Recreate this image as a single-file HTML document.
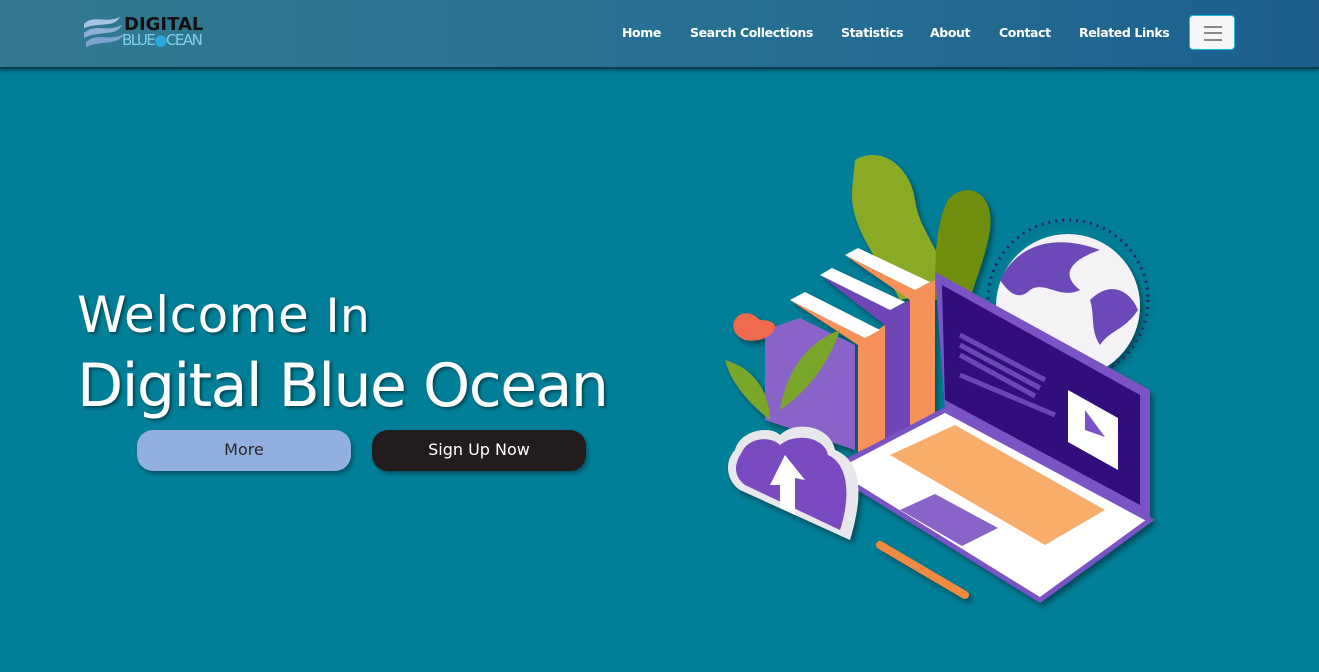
<!DOCTYPE html>
<html><head><meta charset="utf-8"><style>
*{margin:0;padding:0;box-sizing:border-box}
body{width:1319px;height:672px;background:#017f98;overflow:hidden;font-family:"Liberation Sans","DejaVu Sans",sans-serif;position:relative}
.nav{position:absolute;left:0;top:0;width:1319px;height:69px;background:linear-gradient(90deg,#327990,#266f92 60%,#1c5f8e);border-bottom:2px solid #0d3d50;box-shadow:0 2px 3px rgba(0,0,0,.35)}
.nav a{position:absolute;top:25px;color:#fff;font-family:"DejaVu Sans",sans-serif;font-weight:bold;font-size:12.5px;text-decoration:none;letter-spacing:-0.4px}
.tog{position:absolute;left:1189px;top:15px;width:46px;height:35px;background:#f5f6f8;border:1px solid #19c0dd;border-radius:4px}
.tog i{position:absolute;left:14px;width:18px;height:2px;background:#888}
h1{position:absolute;color:#fff;font-weight:normal;text-shadow:2px 2px 3px rgba(0,0,0,.45);white-space:nowrap;font-family:"DejaVu Sans",sans-serif}
.btn{position:absolute;top:430px;height:41px;border-radius:16px;font-family:"DejaVu Sans",sans-serif;font-size:16px;text-align:center;line-height:40px;box-shadow:2px 3px 4px rgba(0,0,0,.35)}
</style></head><body>
<div class="nav">
<svg style="position:absolute;left:82px;top:10px" width="130" height="40" viewBox="0 0 130 40">
<path d="M2 14 C12 4,22 14,38 7 C32 18,18 12,2 18Z" fill="#a9c4e2"/>
<path d="M2 23 C14 13,24 23,40 15 C34 27,18 20,2 28Z" fill="#8fb0d6"/>
<path d="M4 32 C16 22,26 32,42 24 C36 36,20 30,4 37Z" fill="#7fa3cf"/>
<text x="42" y="20" font-family="DejaVu Sans" font-weight="bold" font-size="18" fill="#111">DIGITAL</text>
<text x="40" y="35" font-family="DejaVu Sans" font-size="15" fill="#7fd0ea" letter-spacing="-1.5">BLUE<tspan fill="#29a9e0">●</tspan>CEAN</text>
</svg>
<a style="left:622px">Home</a>
<a style="left:690px">Search Collections</a>
<a style="left:841px">Statistics</a>
<a style="left:930px">About</a>
<a style="left:999px">Contact</a>
<a style="left:1079px">Related Links</a>
<div class="tog"><i style="top:10px"></i><i style="top:16px"></i><i style="top:23px"></i></div>
</div>
<h1 style="left:77px;top:286px;font-size:50px;letter-spacing:0.5px">Welcome <span style="font-size:47px">In</span></h1>
<h1 style="left:77px;top:351px;font-size:60px;letter-spacing:-1.5px">Digital Blue Ocean</h1>
<div class="btn" style="left:137px;width:214px;background:#91afdf;color:#2a2a2a">More</div>
<div class="btn" style="left:372px;width:214px;background:#221c1c;color:#fff">Sign Up Now</div>
<svg style="position:absolute;left:0;top:0" width="1319" height="672">
<defs><filter id="s"><feDropShadow dx="3" dy="4" stdDeviation="3" flood-opacity=".4"/></filter></defs>
<g filter="url(#s)">
<path d="M855 160 C880 145,910 165,915 200 C920 235,945 250,945 290 L900 300 C880 260,850 230,852 190Z" fill="#8aaa28"/>
<path d="M948 200 C965 180,995 190,990 230 C985 260,975 280,970 300 L935 300 C935 260,935 225,948 200Z" fill="#6f8e10"/>
<circle cx="1068" cy="300" r="80" fill="none" stroke="#2a2070" stroke-width="3" stroke-dasharray="2 5"/>
<circle cx="1068" cy="306" r="72" fill="#f4f2f4"/>
<path d="M1000 280 C1020 240,1060 235,1100 250 C1070 260,1060 275,1080 290 C1060 300,1045 280,1030 290 C1020 300,1010 295,1000 280Z M1090 300 C1110 280,1130 290,1138 310 C1125 330,1110 330,1100 345 C1090 330,1095 315,1090 300Z" fill="#6c48b8"/>
<path d="M765 330 L800 318 L855 345 L855 450 L765 420Z" fill="#8a63c9"/>
<path d="M790 300 L865 338 L885 325 L885 440 L858 452 L858 345Z" fill="#f6915a"/>
<path d="M820 275 L890 310 L910 300 L910 430 L885 440 L885 325Z" fill="#7045b6"/>
<path d="M845 255 L915 290 L935 280 L935 420 L910 430 L910 300Z" fill="#f6915a"/>
<path d="M790 300 L865 338 L880 330 L805 292Z M820 275 L890 310 L905 302 L832 268Z M845 255 L915 290 L930 282 L858 248Z" fill="#fff"/>
<path d="M935 272 L1150 390 L1150 520 L945 410Z" fill="#7a52c4"/>
<path d="M942 285 L1140 395 L1140 505 L945 400Z" fill="#300c7c"/>
<path d="M1068 390 L1118 418 L1118 470 L1068 442Z" fill="#fff"/>
<path d="M1085 410 L1105 437 L1085 430Z" fill="#7a52c4"/>
<path d="M960 335 L1045 380 M960 345 L1040 388 M960 355 L1035 396 M960 375 L1055 415" stroke="#6a46b4" stroke-width="5"/>
<path d="M830 470 L945 410 L1150 520 L1040 600Z" fill="#fff" stroke="#7a52c4" stroke-width="5"/>
<path d="M900 510 L935 494 L998 528 L962 546Z" fill="#8a63c9"/>
<path d="M890 455 L955 425 L1105 510 L1045 545Z" fill="#f8a45a" opacity=".9"/>
<path d="M880 545 L965 595" stroke="#f08a40" stroke-width="8" stroke-linecap="round"/>
<path d="M760 320 C740 300,720 330,745 340 C770 345,790 320,760 320Z" fill="#f06a50"/>
<path d="M725 360 C760 370,770 400,770 420 C745 400,730 380,725 360Z M840 330 C800 345,785 380,780 410 C810 390,830 360,840 330Z" fill="#7aa62a"/>
<path d="M735 450 C740 430,770 425,780 435 C795 420,830 425,835 450 C860 460,865 490,850 540 L740 490 C725 480,725 460,735 450Z" fill="#e8e8ec"/>
<path d="M742 452 C748 438,770 435,780 445 C795 432,825 437,828 455 C850 465,850 500,840 530 L745 485 C732 475,735 462,742 452Z" fill="#7a4cc0"/>
<path d="M770 485 L785 455 L805 480 L795 478 L795 515 L780 508 L780 485Z" fill="#fff"/>
</g>
</svg>
</body></html>
